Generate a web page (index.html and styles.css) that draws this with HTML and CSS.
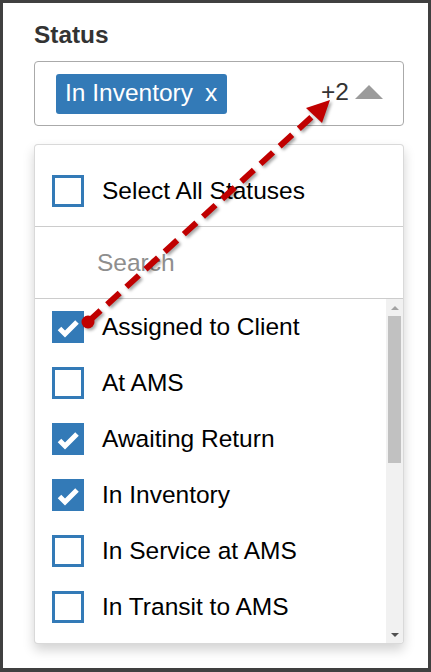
FILE: index.html
```html
<!DOCTYPE html>
<html lang="en">
<head>
<meta charset="utf-8">
<title>Status filter</title>
<link rel="stylesheet" href="styles.css">
</head>
<body>
<div class="frame">
  <div class="field-label">Status</div>
  <div class="select">
    <span class="tag">In Inventory<span class="tag-x">x</span></span>
    <span class="more">+2</span>
    <span class="caret"></span>
  </div>
  <div class="dropdown">
    <div class="select-all">
      <span class="cb"></span>
      <span class="opt-text">Select All Statuses</span>
    </div>
    <div class="search">
      <input class="search-input" type="text" placeholder="Search">
    </div>
    <div class="list-wrap">
      <ul class="list">
        <li class="item"><span class="cb checked"><svg viewBox="0 0 32 32" class="check"><path d="M7.5 17.5 L13 23 L25 11"/></svg></span><span class="opt-text">Assigned to Client</span></li>
        <li class="item"><span class="cb"></span><span class="opt-text">At AMS</span></li>
        <li class="item"><span class="cb checked"><svg viewBox="0 0 32 32" class="check"><path d="M7.5 17.5 L13 23 L25 11"/></svg></span><span class="opt-text">Awaiting Return</span></li>
        <li class="item"><span class="cb checked"><svg viewBox="0 0 32 32" class="check"><path d="M7.5 17.5 L13 23 L25 11"/></svg></span><span class="opt-text">In Inventory</span></li>
        <li class="item"><span class="cb"></span><span class="opt-text">In Service at AMS</span></li>
        <li class="item"><span class="cb"></span><span class="opt-text">In Transit to AMS</span></li>
      </ul>
      <div class="scrollbar">
        <div class="sb-btn"><span class="sb-up"></span></div>
        <div class="sb-track"><div class="sb-thumb"></div></div>
        <div class="sb-btn sb-btn-down"><span class="sb-down"></span></div>
      </div>
    </div>
  </div>
</div>
<svg class="annotation" width="431" height="672" viewBox="0 0 431 672">
  <g class="arrow">
    <line x1="88" y1="322" x2="316" y2="113" stroke="#c00000" stroke-width="6" stroke-dasharray="17 9"/>
    <circle cx="88" cy="322" r="6.5" fill="#c00000"/>
    <polygon points="330,100 306,108 322,123" fill="#c00000"/>
  </g>
</svg>
</body>
</html>
```
FILE: styles.css
```css
* { box-sizing: border-box; }
html, body { margin: 0; padding: 0; }
body {
  position: relative;
  width: 431px;
  height: 672px;
  background: #404040;
  font-family: "Liberation Sans", Arial, sans-serif;
  overflow: hidden;
}
.frame {
  width: 431px;
  height: 672px;
  border: 3px solid #404040;
  border-bottom-width: 4px;
  background: #fff;
  padding: 18px 0 0 31px;
}
.field-label {
  font-size: 24.4px;
  line-height: 28px;
  font-weight: bold;
  color: #333;
}
.select {
  margin-top: 12px;
  width: 370px;
  height: 65px;
  border: 1px solid #aaa;
  border-radius: 4px;
  display: flex;
  align-items: center;
  padding: 0 20px 0 21px;
}
.tag {
  display: flex;
  height: 40px;
  line-height: 38px;
  padding: 0 10px 0 9px;
  background: #337ab7;
  color: #fff;
  border-radius: 3px;
  font-size: 24.5px;
}
.tag-x { margin-left: 12px; }
.more {
  margin-left: auto;
  font-size: 24.5px;
  line-height: 28px;
  color: #333;
  margin-bottom: 3px;
}
.caret {
  margin-left: 6px;
  width: 0;
  height: 0;
  border-left: 14px solid transparent;
  border-right: 14px solid transparent;
  border-bottom: 14px solid #9b9b9b;
  margin-bottom: 3px;
}
.dropdown {
  margin-top: 18px;
  width: 370px;
  height: 500px;
  border: 1px solid rgba(0,0,0,.15);
  border-radius: 4px;
  box-shadow: 0 6px 12px rgba(0,0,0,.175);
  background: #fff;
  display: flex;
  flex-direction: column;
  overflow: hidden;
}
.select-all {
  display: flex;
  align-items: center;
  gap: 18px;
  padding: 30px 0 19px 17px;
}
.cb {
  flex: none;
  width: 32px;
  height: 32px;
  border: 3px solid #337ab7;
  background: #fff;
  position: relative;
}
.cb.checked { background: #337ab7; }
.check {
  position: absolute;
  left: -3px;
  top: -3px;
  width: 32px;
  height: 32px;
  fill: none;
  stroke: #fff;
  stroke-width: 5;
  stroke-linecap: butt;
  stroke-linejoin: miter;
}
.opt-text {
  font-size: 24.5px;
  line-height: 32px;
  color: #000;
  white-space: nowrap;
}
.search {
  border-top: 1px solid #ccc;
  border-bottom: 1px solid #ccc;
  height: 73px;
  padding-left: 62px;
}
.search-input {
  display: block;
  width: 100%;
  height: 71px;
  border: none;
  outline: none;
  padding: 0;
  margin: 0;
  font-family: "Liberation Sans", Arial, sans-serif;
  font-size: 24.5px;
  color: #333;
  background: transparent;
}
.search-input::placeholder { color: #8e8e8e; }
.list-wrap {
  flex: 1;
  min-height: 0;
  display: flex;
}
.list {
  flex: 1;
  margin: 0;
  padding: 0;
  list-style: none;
  overflow: hidden;
}
.item {
  height: 56px;
  display: flex;
  align-items: center;
  gap: 18px;
  padding-left: 17px;
}
.scrollbar {
  width: 17px;
  flex: none;
  background: #f1f1f1;
  display: flex;
  flex-direction: column;
}
.sb-btn {
  height: 17px;
  flex: none;
  display: flex;
  justify-content: center;
  align-items: center;
}
.sb-up {
  width: 0; height: 0;
  border-left: 4px solid transparent;
  border-right: 4px solid transparent;
  border-bottom: 4px solid #a3a3a3;
}
.sb-down {
  width: 0; height: 0;
  border-left: 4px solid transparent;
  border-right: 4px solid transparent;
  border-top: 4px solid #505050;
}
.sb-track { flex: 1; padding: 0 2px; }
.sb-thumb {
  height: 147px;
  background: #c1c1c1;
}
.annotation {
  position: absolute;
  left: 0;
  top: 0;
  pointer-events: none;
}
.arrow { filter: drop-shadow(2px 2px 1.5px rgba(0,0,0,.35)); }
```
